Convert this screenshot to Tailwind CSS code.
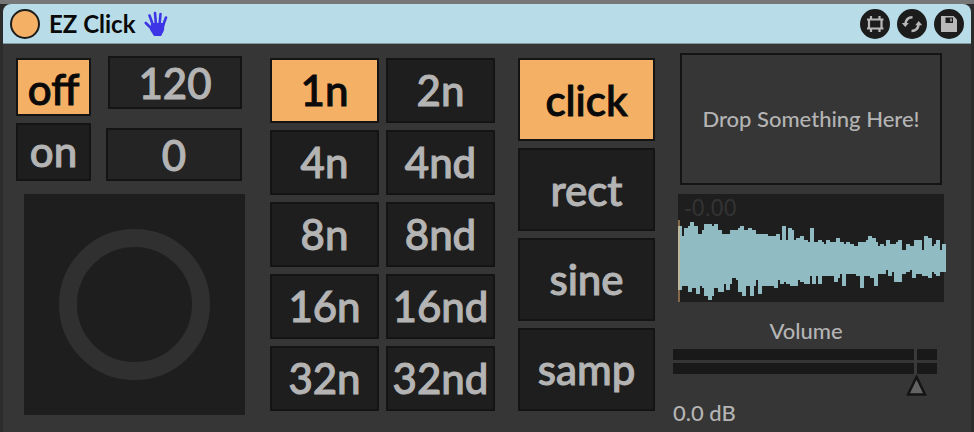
<!DOCTYPE html>
<html lang="en">

<head>
    <meta charset="UTF-8">
    <meta name="viewport" content="width=device-width, initial-scale=1.0">
    <title>EZ Click</title>
    <script src="https://cdn.jsdelivr.net/npm/@tailwindcss/browser@4"></script>
</head>

<body class="min-h-screen flex flex-col bg-[#2c2c2c] border-t-4 border-[#777777] text-[#b4b4b4] overflow-hidden" style="font-family: Lato, 'Open Sans', sans-serif;">
    <div class="flex-1 flex flex-col mx-[3px] bg-[#363636] rounded-t-lg">
        <header class="h-10 flex items-center bg-[#b8dce8] border-b border-[#7f979f] rounded-t-lg pl-[7px] pr-[7px]">
            <button aria-label="Device on" class="size-[30px] rounded-full bg-[#f4b065] border-2 border-[#1c1c1c]"></button>
            <h1 class="ml-[9px] text-[24px] leading-none font-bold text-[#0a0a0a]">EZ Click</h1>
            <svg class="ml-[8px] w-6 h-[26px]" viewBox="0 0 24 26" fill="none" stroke="#3d35e6" stroke-width="2.600" stroke-linecap="round" aria-hidden="true">
                <path d="M1.800 12 9 19M5.500 4.500l4 11M11 2l1 12M16.500 3 15.500 14M22 6.500 18.500 16" />
                <path d="M8 13h11.500l-.5 6-2.500 5h-6L7 18.500z" fill="#3d35e6" stroke-width="2" stroke-linejoin="round" />
            </svg>
            <div class="ml-auto flex gap-[7px]">
                <button aria-label="Edit device" class="size-[30px] rounded-full bg-[#1c1c1c]">
                    <svg viewBox="0 0 30 30" fill="none" stroke="#b8b8b8" stroke-width="2.200">
                        <path d="M9 10.500h12.500v9H9zM11 7v3M19.500 7v3M11 20v3M19.500 20v3M7 10.500h2M21.500 10.500h2M7 19.500h2M21.500 19.500h2" />
                    </svg>
                </button>
                <button aria-label="Hot-swap" class="size-[30px] rounded-full bg-[#1c1c1c]">
                    <svg viewBox="0 0 30 30" fill="none" stroke="#b8b8b8" stroke-width="2.500">
                        <path d="M15.500 8.200C11.500 8.200 8.800 10.500 8.300 15M14.500 22c4 0 6.700-2.300 7.200-6.800" />
                        <path d="M4.800 14h7L8.300 18zM18.200 16.200h7L21.700 12z" fill="#b8b8b8" stroke="none" />
                    </svg>
                </button>
                <button aria-label="Save preset" class="size-[30px] rounded-full bg-[#1c1c1c]">
                    <svg viewBox="0 0 30 30">
                        <path d="M7 7h12.500L23 10.500V23H7z" fill="#b8b8b8" />
                        <path d="M11.500 8.500h7.500v5.500h-7.500z" fill="#1c1c1c" />
                        <path d="M16 9.500h2v3h-2z" fill="#8f8f8f" />
                    </svg>
                </button>
            </div>
        </header>

        <main class="grid grid-cols-[236fr_230fr_137fr_272fr] gap-[18px] pt-[9px] pl-[13px] pr-[26px]">
            <!-- Transport -->
            <section class="pt-[3px]">
                <div class="flex gap-[15px] mr-[10px] text-[42px] leading-none font-medium [-webkit-text-stroke:1px]">
                    <div class="w-[75px] pt-[2px] flex flex-col gap-[7px]">
                        <button class="h-[58px] pt-1 bg-[#f4b065] text-[#0a0a0a] border-2 border-[#141414]">off</button>
                        <button class="h-[58px] pb-[2px] bg-[#1e1e1e] border-2 border-[#141414]">on</button>
                    </div>
                    <div class="flex-1 min-w-0 flex flex-col gap-[19px]">
                        <div class="pl-[2px]">
                            <input aria-label="Tempo" value="120" class="block w-full h-[53px] text-center bg-[#242424] border-2 border-[#141414]">
                        </div>
                        <input aria-label="Offset" value="0" class="block w-full h-[53px] text-center bg-[#242424] border-2 border-[#141414]">
                    </div>
                </div>
                <div class="mt-[13px] ml-2 mr-[7px] aspect-square bg-[#1e1e1e] grid place-items-center">
                    <button aria-label="Beat" class="size-[151px] rounded-full border-[18px] border-[#303030]"></button>
                </div>
            </section>

            <!-- Note values -->
            <section class="mt-[5px] mr-[5px] grid grid-cols-2 auto-rows-[65px] content-start gap-[7px] text-[42px] leading-none font-medium [-webkit-text-stroke:1px]">
                <button class="pb-[2px] bg-[#f4b065] text-[#0a0a0a] border-2 border-[#141414]">1n</button>
                <button class="pb-[2px] bg-[#1e1e1e] border-2 border-[#141414]">2n</button>
                <button class="pb-[2px] bg-[#1e1e1e] border-2 border-[#141414]">4n</button>
                <button class="pb-[2px] bg-[#1e1e1e] border-2 border-[#141414]">4nd</button>
                <button class="pb-[2px] bg-[#1e1e1e] border-2 border-[#141414]">8n</button>
                <button class="pb-[2px] bg-[#1e1e1e] border-2 border-[#141414]">8nd</button>
                <button class="pb-[2px] bg-[#1e1e1e] border-2 border-[#141414]">16n</button>
                <button class="pb-[2px] bg-[#1e1e1e] border-2 border-[#141414]">16nd</button>
                <button class="pb-[2px] bg-[#1e1e1e] border-2 border-[#141414]">32n</button>
                <button class="pb-[2px] bg-[#1e1e1e] border-2 border-[#141414]">32nd</button>
            </section>

            <!-- Sound -->
            <section class="mt-[5px] grid auto-rows-[83px] content-start gap-[7px] text-[42px] leading-none font-medium [-webkit-text-stroke:1px]">
                <button class="bg-[#f4b065] text-[#0a0a0a] border-2 border-[#141414]">click</button>
                <button class="bg-[#1e1e1e] border-2 border-[#141414]">rect</button>
                <button class="pb-[2px] bg-[#1e1e1e] border-2 border-[#141414]">sine</button>
                <button class="pb-[2px] bg-[#1e1e1e] border-2 border-[#141414]">samp</button>
            </section>

            <!-- Sample and volume -->
            <section class="text-[22px] leading-6 font-medium">
                <div class="ml-[7px] mr-[3px] h-[132px] grid place-items-center border-2 border-[#141414] whitespace-nowrap">Drop Something Here!</div>

                <div class="relative mt-[9px] ml-[5px] mr-px h-[108px] bg-[#1e1e1e]">
                    <span class="absolute left-[6px] top-[2px] text-[23px] text-[#333333] font-normal" style="font-family: 'Liberation Sans', sans-serif;">-0.00</span>
                    <svg class="size-full overflow-visible" viewBox="54 42 798 324" preserveAspectRatio="none" shape-rendering="crispEdges" aria-hidden="true">
                        <path fill="#90bbc3" d="M54 138H66V168H72V144H84V138H90V126H102V138H114V162H126V150H132V132H156V138H162V132H174V150H186V162H210V150H234V144H240V138H252V150H264V144H276V150H288V162H324V168H348V162H360V180H366V138H378V180H384V144H396V150H402V180H408V174H420V168H432V180H444V186H450V144H462V186H474V180H486V186H492V192H498V180H510V186H528V174H540V186H552V192H558V186H570V192H582V198H594V186H618V180H624V168H636V174H648V186H654V198H660V192H672V198H678V180H690V192H708V186H714V180H726V210H738V192H750V198H762V180H786V210H792V168H804V174H816V198H822V192H828V180H840V210H846V192H858
                            V276H840V288H828V282H822V276H816V294H804V288H786V282H768V294H756V270H750V276H738V282H726V306H702V276H696V288H684V270H678V282H654V318H642V294H630V288H612V324H600V288H588V282H558V318H546V282H540V294H534V306H522V288H486V312H474V288H468V312H456V288H450V312H432V306H420V300H414V318H402V318H390V312H378V306H372V312H360V300H354V324H342V318H306V342H294V300H288V318H282V348H270V318H258V348H246V336H234V300H228V294H216V312H210V330H198V312H192V336H174V324H162V348H156V360H144V348H132V324H126V318H120V342H108V324H96V336H84V318H66V330H54Z" />
                        <path fill="#86684a" d="M54 120h6v246h-6z" />
                        <path fill="#bdb89b" d="M54 138h6v192h-6z" />
                    </svg>
                </div>

                <label for="volume" class="block mt-[17px] pr-[6px] text-center">Volume</label>
                <div class="relative mt-[6px] mr-2 h-[48px]">
                    <div class="flex flex-col gap-[3px]">
                        <div class="h-[11px] bg-[#191919]"></div>
                        <div class="h-[11px] bg-[#191919]"></div>
                    </div>
                    <!-- handle -->
                    <svg class="absolute top-0 right-[9px] w-[23px] h-12" viewBox="0 0 23 48" aria-hidden="true">
                        <path d="M9 0h3v26h-3z" fill="#3a3a3a" />
                        <path d="M11.500 28 20 45.500H3z" fill="#636363" stroke="#141414" stroke-width="2.500" />
                    </svg>
                    <input id="volume" type="range" min="-70" max="6" value="0" class="absolute inset-0 size-full opacity-0">
                </div>
                <output for="volume" class="block mt-1">0.0 dB</output>
            </section>
        </main>
    </div>
</body>

</html>
